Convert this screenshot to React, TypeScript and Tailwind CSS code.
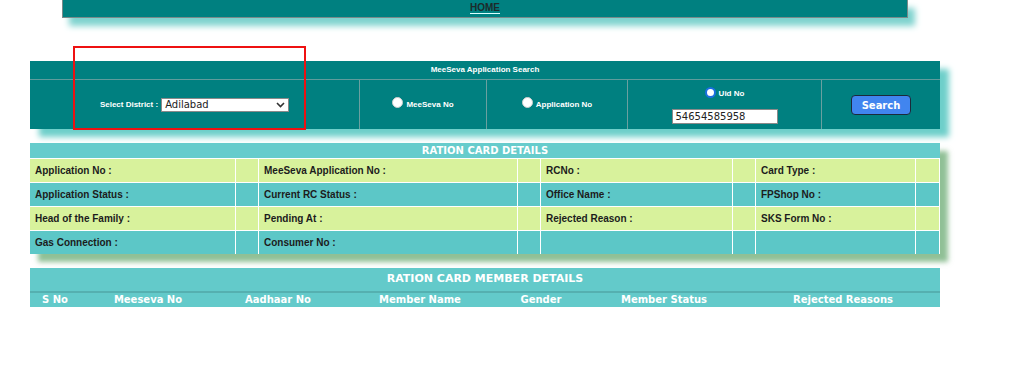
import React from 'react'

const rows = [
  ['Application No :', 'MeeSeva Application No :', 'RCNo :', 'Card Type :'],
  ['Application Status :', 'Current RC Status :', 'Office Name :', 'FPShop No :'],
  ['Head of the Family :', 'Pending At :', 'Rejected Reason :', 'SKS Form No :'],
  ['Gas Connection :', 'Consumer No :', '', ''],
]

const memberCols = [
  { label: 'S No', w: 'w-[50px]' },
  { label: 'Meeseva No', w: 'w-[136px]' },
  { label: 'Aadhaar No', w: 'w-[124px]' },
  { label: 'Member Name', w: 'w-[160px]' },
  { label: 'Gender', w: 'w-[82px]' },
  { label: 'Member Status', w: 'w-[164px]' },
  { label: 'Rejected Reasons', w: 'w-[194px]' },
]

function Radio({ checked }: { checked?: boolean }) {
  return checked ? (
    <span className="block w-[11px] h-[11px] rounded-full bg-white border-[2.5px] border-[#1a6fe0]" />
  ) : (
    <span className="block w-[11px] h-[11px] rounded-full bg-white border border-[#cfcfcf]" />
  )
}

export default function App() {
  return (
    <div className="relative w-[1024px] h-[376px] bg-white overflow-hidden font-['Liberation_Sans',Arial,sans-serif]">
      {/* top menu bar */}
      <div className="ml-[62px] w-[846px] h-[18px] bg-[#008080] border-b border-x border-[#7a8a8a] shadow-[7px_8px_6px_#7fd3cf] flex justify-center items-start">
        <span className="mt-[3px] text-[10px] leading-[10px] font-bold text-[#1d2b2b] underline decoration-[#dff] underline-offset-2">HOME</span>
      </div>

      {/* search panel */}
      <div className="mt-[43px] ml-[30px] w-[910px] bg-[#008080] shadow-[9px_8px_6px_#6ecfca]">
        <div className="h-[19px] flex items-center justify-center border-b border-[#5f9c9c] text-[8px] font-bold text-white">
          MeeSeva Application Search
        </div>
        <div className="h-[49px] flex">
          <div className="w-[330px] flex items-center justify-center gap-[3px] border-r border-[#6aa0a0]">
            <span className="text-[8px] font-bold text-white">Select District :</span>
            <div className="w-[128px] h-[14px] bg-white border border-[#8a8a8a] flex items-center justify-between px-[3px]">
              <span className="text-[10px] leading-none text-[#222] font-['DejaVu_Sans',sans-serif]">Adilabad</span>
              <svg width="9" height="6" viewBox="0 0 9 6"><path d="M1 1l3.5 3.5L8 1" fill="none" stroke="#333" strokeWidth="1.6" /></svg>
            </div>
          </div>
          <div className="w-[127px] flex items-center justify-center gap-[3px] border-r border-[#6aa0a0]">
            <span className="-mt-[4px]"><Radio /></span>
            <span className="text-[8px] font-bold text-white">MeeSeva No</span>
          </div>
          <div className="w-[141px] flex items-center justify-center gap-[3px] border-r border-[#6aa0a0]">
            <span className="-mt-[4px]"><Radio /></span>
            <span className="text-[8px] font-bold text-white">Application No</span>
          </div>
          <div className="w-[194px] flex flex-col items-center justify-start pt-[8px] gap-[10px] border-r border-[#6aa0a0]">
            <div className="h-[11px] flex items-center gap-[3px]">
              <span className="-mt-[3px]"><Radio checked /></span>
              <span className="text-[8px] leading-none font-bold text-white">Uid No</span>
            </div>
            <div className="w-[106px] h-[15px] bg-white border border-[#8a8a8a] flex items-center px-[3px]">
              <span className="text-[10px] leading-none text-[#222] font-['DejaVu_Sans',sans-serif]">54654585958</span>
            </div>
          </div>
          <div className="flex-1 flex items-start justify-center pt-[15px]">
            <button className="w-[60px] h-[20px] rounded-[4px] bg-[#4185ef] border-[1.5px] border-[#1b2a3a] text-white text-[10px] font-bold font-['DejaVu_Sans',sans-serif]">
              Search
            </button>
          </div>
        </div>
      </div>

      {/* ration card details */}
      <div className="mt-[14px] ml-[30px] w-[910px] bg-white shadow-[8px_8px_5px_rgba(70,150,80,0.6)]">
        <div className="h-[15px] bg-[#66cccc] flex items-center justify-center text-[10px] font-bold text-white font-['DejaVu_Sans',sans-serif]">
          RATION CARD DETAILS
        </div>
        <div className="grid grid-cols-[205px_22px_258px_22px_191px_22px_159px_23px] gap-x-px gap-y-[1px] pt-px">
          {rows.map((r, i) => {
            const bg = i % 2 === 0 ? 'bg-[#d8f29c]' : 'bg-[#5cc7c7]'
            return r.map((label, j) => (
              <React.Fragment key={`${i}-${j}`}>
                <div className={`h-[23px] ${bg} flex items-center pl-[5px] text-[10px] font-bold text-[#1c1c1c]`}>{label}</div>
                <div className={`h-[23px] ${bg}`} />
              </React.Fragment>
            ))
          })}
        </div>
      </div>

      {/* member details */}
      <div className="mt-[14px] ml-[30px] w-[910px] bg-[#63caca] font-['DejaVu_Sans',sans-serif]">
        <div className="h-[25px] flex items-center justify-center border-b-2 border-[#55b0b0] text-[11px] font-bold text-white">
          RATION CARD MEMBER DETAILS
        </div>
        <div className="h-[14px] flex items-center">
          {memberCols.map(c => (
            <div key={c.label} className={`${c.w} text-center text-[10px] leading-none font-bold text-white`}>{c.label}</div>
          ))}
        </div>
      </div>

      {/* highlight box */}
      <div className="absolute left-[73px] top-[46px] w-[233px] h-[84px] border-2 border-[#ee1111]" />
    </div>
  )
}
